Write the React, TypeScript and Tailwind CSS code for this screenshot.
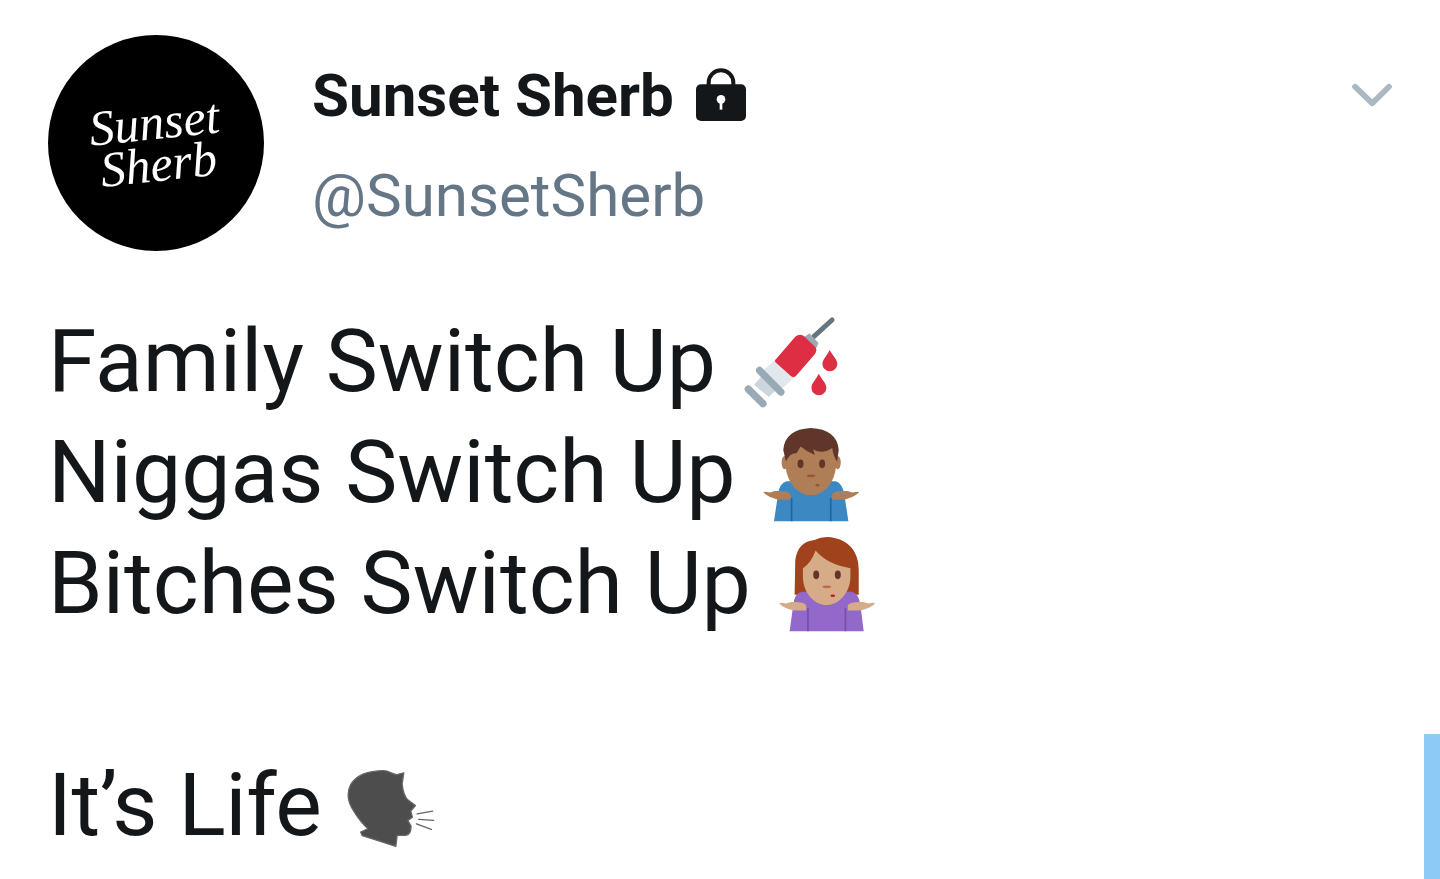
const Syringe = () => (
  <svg viewBox="190 45 290 280" width={97} height={93} className="shrink-0">
    <path d="M405 110 L460 60" stroke="#66757F" strokeWidth={15} strokeLinecap="round" />
    <path d="M378 112 L392 103 L417 130 L410 145 Z" fill="#99AAB5" stroke="#99AAB5" strokeWidth={4} strokeLinejoin="round" />
    <path d="M225 255 L270 292 L300 262 L255 222 Z" fill="#CCD6DD" />
    <path d="M252 212 L287 182 L345 234 L308 268 Z" fill="#E1E8ED" />
    <path d="M293 176 L350 110 Q362 100 375 108 L408 140 Q418 150 408 163 L352 228 Q344 236 336 229 L293 190 Q283 184 293 176 Z" fill="#DD2E44" />
    <path d="M242 212 L306 277" stroke="#99AAB5" strokeWidth={22} strokeLinecap="round" />
    <path d="M208 268 L252 312" stroke="#99AAB5" strokeWidth={22} strokeLinecap="round" />
    <path d="M453 150 C462 168 476 178 476 192 A22 22 0 0 1 431 192 C431 178 445 168 453 150 Z" fill="#DD2E44" />
    <path d="M420 222 C429 240 443 250 443 264 A22 22 0 0 1 398 264 C398 250 412 240 420 222 Z" fill="#DD2E44" />
  </svg>
);

const ShrugMan = () => (
  <svg viewBox="30 15 310 295" width={103} height={98} className="shrink-0">
    <path d="M72 305 L84 225 Q88 190 110 184 L258 184 Q278 190 284 225 L296 305 Z" fill="#3B88C3" />
    <path d="M125 235 V305 M243 235 V305" stroke="#226699" strokeWidth={5} />
    <path d="M40 218 Q42 214 60 218 L75 214 Q118 212 122 224 L122 240 L85 240 Q55 232 40 218 Z" fill="#AF7E57" />
    <path d="M328 218 Q326 214 308 218 L293 214 Q250 212 247 224 L247 240 L283 240 Q313 232 328 218 Z" fill="#AF7E57" />
    <ellipse cx={104} cy={128} rx={9} ry={20} fill="#AF7E57" />
    <ellipse cx={264} cy={128} rx={9} ry={20} fill="#AF7E57" />
    <path d="M106 120 Q110 70 183 60 Q258 70 260 120 C260 190 222 226 183 226 C145 226 106 190 106 120 Z" fill="#AF7E57" />
    <path d="M108 125 L100 90 Q105 28 183 24 Q262 28 267 90 L262 125 Q252 112 247 85 Q215 105 190 88 L195 105 Q170 95 152 80 L140 100 Q120 98 108 125 Z" fill="#60352A" />
    <ellipse cx={152} cy={132} rx={9} ry={13} fill="#60352A" />
    <ellipse cx={217} cy={132} rx={9} ry={13} fill="#60352A" />
    <ellipse cx={184} cy={168} rx={13} ry={4} fill="#915A34" />
    <ellipse cx={203} cy={196} rx={6} ry={4} fill="#915A34" />
  </svg>
);

const ShrugWoman = () => (
  <svg viewBox="35 15 305 295" width={102} height={98} className="shrink-0">
    <path d="M90 195 L92 90 Q100 35 150 30 Q190 10 240 35 Q282 60 283 120 L283 195 Z" fill="#A0421B" />
    <path d="M75 305 L86 225 Q90 190 112 186 L262 186 Q282 190 288 225 L298 305 Z" fill="#9268CA" />
    <path d="M130 235 V305 M243 235 V305" stroke="#7450A8" strokeWidth={5} />
    <path d="M44 222 Q46 216 64 221 L80 217 Q122 215 125 228 L125 242 L88 242 Q58 236 44 222 Z" fill="#D5AB88" />
    <path d="M332 222 Q330 216 312 221 L296 217 Q254 215 250 228 L250 242 L287 242 Q317 236 332 222 Z" fill="#D5AB88" />
    <path d="M115 115 Q140 100 153 62 Q190 105 258 115 L258 140 C258 190 222 226 186 226 C150 226 115 190 115 140 Z" fill="#D5AB88" />
    <ellipse cx={155} cy={135} rx={9} ry={13} fill="#60352A" />
    <ellipse cx={220} cy={135} rx={9} ry={13} fill="#60352A" />
    <ellipse cx={187} cy={171} rx={13} ry={4} fill="#C1694F" />
    <ellipse cx={205} cy={198} rx={7} ry={4} fill="#BB1A34" />
  </svg>
);

const SpeakingHead = () => (
  <svg viewBox="30 20 280 245" width={93} height={82} className="shrink-0">
    <path
      d="M80 215 L102 205 C85 190 70 170 58 150 C42 125 36 100 50 72 C68 42 105 30 150 30 C165 30 178 42 190 42 L210 37 L205 70 C207 90 212 108 222 118 L245 135 L231 152 L236 170 L222 180 L232 197 C232 212 228 225 215 225 L190 225 L186 258 L130 240 L85 226 Z"
      fill="#4D4D4D"
      stroke="#666666"
      strokeWidth={4}
      strokeLinejoin="round"
    />
    <path d="M250 160 L297 152 M255 177 L300 180 M248 190 L293 207" stroke="#666666" strokeWidth={4} strokeLinecap="round" />
  </svg>
);

const lines = [
  { text: "Family Switch Up", gap: "ml-[26px]", Emoji: Syringe },
  { text: "Niggas Switch Up", gap: "ml-[24px] mt-[2px]", Emoji: ShrugMan },
  { text: "Bitches Switch Up", gap: "ml-[25px]", Emoji: ShrugWoman },
];

export default function App() {
  return (
    <div className="relative h-[879px] w-full overflow-hidden bg-white font-['Roboto',sans-serif] text-[#14171A]">
      <header className="flex pl-12 pr-[40px] pt-[35px]">
        <div className="flex h-[216px] w-[216px] shrink-0 items-center justify-center rounded-full bg-black">
          <div className="-rotate-6 text-center font-['Liberation_Serif',serif] text-[50px] leading-[42px] text-white italic">
            Sunset
            <br />
            Sherb
          </div>
        </div>
        <div className="ml-[48px] pt-[31px]">
          <div className="flex h-[60px] items-center pt-[1px] text-[60.1px] font-bold">
            <span>Sunset Sherb</span>
            <svg viewBox="0 0 210 210" width={70} height={70} className="-mr-5 ml-[12px] shrink-0">
              <path d="M68 70 V62 A37 37 0 0 1 142 62 V70" fill="none" stroke="#14171A" strokeWidth={12} />
              <rect x={30} y={67} width={150} height={110} rx={15} fill="#14171A" />
              <circle cx={105} cy={112} r={13} fill="#fff" />
              <path d="M105 115 V143" stroke="#fff" strokeWidth={8} />
            </svg>
          </div>
          <div className="mt-[40px] text-[60.1px] leading-[60px] text-[#657786]">@SunsetSherb</div>
        </div>
        <svg viewBox="0 0 180 150" width={60} height={50} className="ml-auto mt-[35px] shrink-0">
          <path d="M45 50 L97 100 L147 50" fill="none" stroke="#AAB8C2" strokeWidth={17} strokeLinecap="round" strokeLinejoin="round" />
        </svg>
      </header>

      <main className="mt-[55px] pl-[48px] text-[87.75px]">
        {lines.map(({ text, gap, Emoji }) => (
          <div key={text} className="flex h-[111px] items-center leading-[111px]">
            <span>{text}</span>
            <span className={gap}>
              <Emoji />
            </span>
          </div>
        ))}
        <div className="h-[111px]" />
        <div className="flex h-[111px] items-center leading-[111px]">
          <span className="tracking-[-0.4px]">It’s Life</span>
          <span className="ml-[23px] mt-[4px]">
            <SpeakingHead />
          </span>
        </div>
      </main>

      <div className="absolute right-0 bottom-0 h-[145px] w-4 bg-[#8DCBF5]" />
    </div>
  );
}
